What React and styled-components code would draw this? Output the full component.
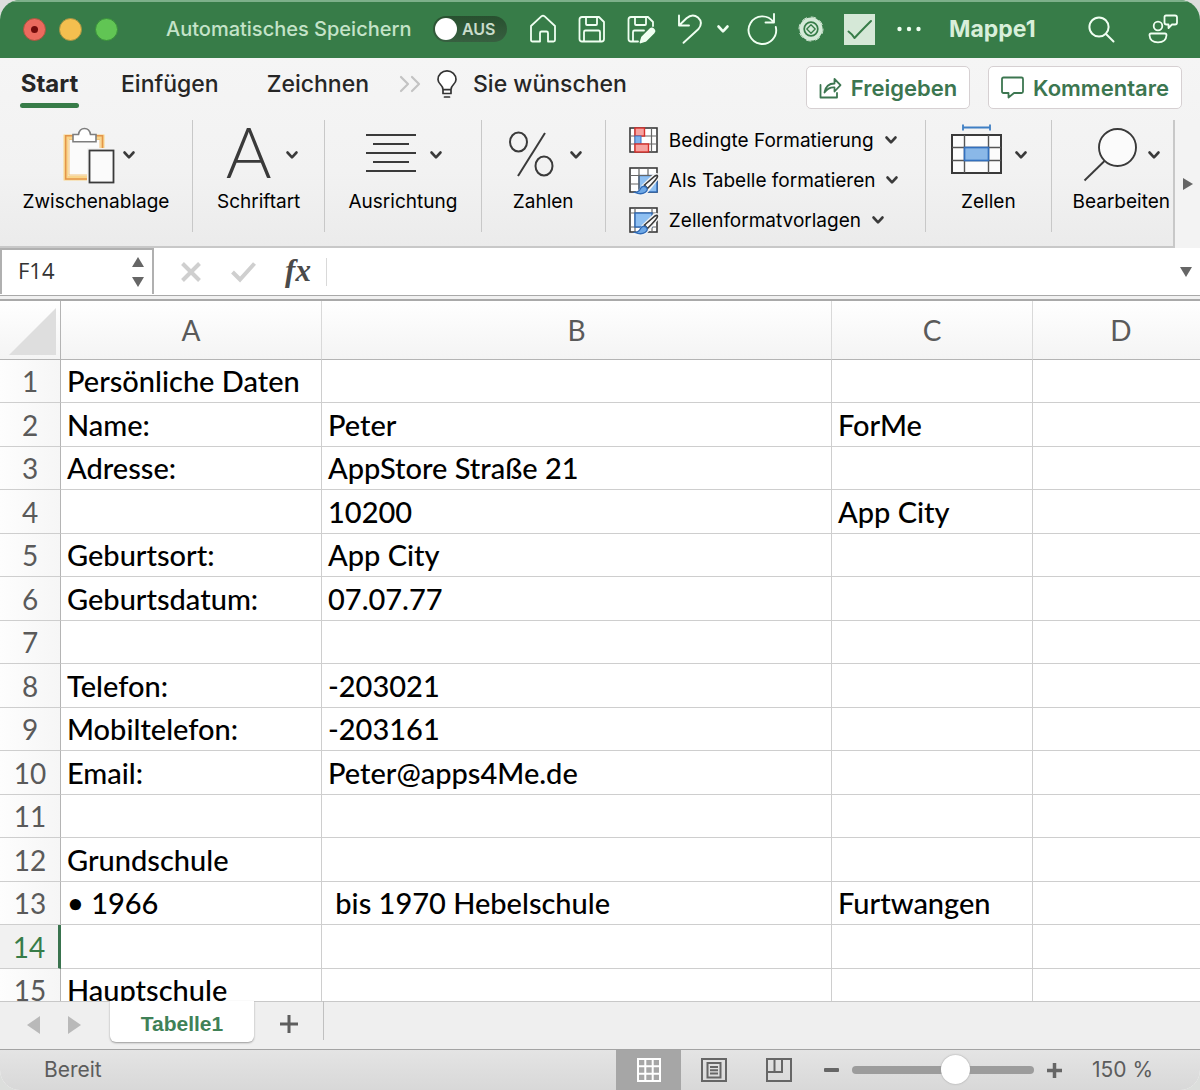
import React, { useState } from "react";
import styled, { createGlobalStyle, css } from "styled-components";

const UI = `Inter, "Liberation Sans", sans-serif`;
const CELL = `Lato, "Liberation Sans", sans-serif`;
const GREEN = "#377c48";

const GlobalStyle = createGlobalStyle`
  *, *::before, *::after { box-sizing: border-box; }
  body { margin: 0; background: #dcdedc; font-family: ${UI}; }
  button, input { font: inherit; color: inherit; margin: 0; }
  button { border: 0; padding: 0; background: none; }
  svg { display: block; flex: none; overflow: visible; }
`;

const Window = styled.div`
  display: flex;
  flex-direction: column;
  height: 100vh;
  border-radius: 20px;
  overflow: hidden;
  background: #fff;
`;

/* Title bar */

const TitleBar = styled.header`
  display: flex;
  align-items: center;
  height: 58px;
  flex: none;
  padding: 0 13px 0 23px;
  background: ${GREEN};
  box-shadow: inset 0 2px #7db08a;
  color: #f0fff2;
`;

const Lights = styled.div`
  display: flex;
  gap: 13px;
  margin-right: 48px;
`;

const Light = styled.button`
  width: 23px;
  height: 23px;
  border-radius: 50%;
  border: 1px solid ${(p) => p.$edge};
  background: ${(p) => p.$fill};
  display: grid;
  place-items: center;
`;

const LightDot = styled.span`
  width: 7px;
  height: 7px;
  border-radius: 50%;
  background: #730b0b;
`;

const AutoSaveLabel = styled.label`
  font-size: 20px;
  font-weight: 500;
  line-height: 26px;
  color: #c4e3c8;
  white-space: nowrap;
  width: 267px;
`;

const Toggle = styled.div`
  display: grid;
  align-items: center;
  width: 74px;
  margin-right: 11px;
  > * { grid-area: 1 / 1; }
`;

const ToggleInput = styled.input`
  appearance: none;
  width: 74px;
  height: 26px;
  border-radius: 13px;
  background: linear-gradient(#28502f, #375f40);
  &::before {
    content: "";
    display: block;
    width: 22px;
    height: 22px;
    margin: 2px;
    border-radius: 50%;
    background: #fff;
  }
`;

const ToggleText = styled.span`
  padding-left: 29px;
  font-size: 16px;
  font-weight: 600;
  line-height: 26px;
  color: #c9dccb;
  pointer-events: none;
`;

const TitleButton = styled.button`
  display: flex;
  align-items: center;
  justify-content: center;
  width: 49px;
  height: 40px;
  flex: none;
`;

const TitleChevron = styled(TitleButton)`
  width: 23px;
  justify-content: flex-start;
  padding-left: 3px;
`;

const DocumentTitle = styled.h1`
  margin: 0 auto 0 16px;
  font-size: 23px;
  font-weight: 700;
  line-height: 28px;
  color: #d8efda;
`;

const TitleTools = styled.div`
  display: flex;
  gap: 12px;
`;

/* Ribbon */

const Ribbon = styled.section`
  flex: none;
  background: linear-gradient(#f5f5f5, #f2f2f2 60%, #ebebeb);
`;

const TabRow = styled.nav`
  display: flex;
  align-items: flex-start;
  height: 62px;
  padding: 8px 18px 0 20px;
  color: #262626;
`;

const RibbonTab = styled.button`
  height: 42px;
  min-width: 59px;
  margin-right: ${(p) => p.$gap || 0}px;
  padding-top: 4px;
  font-size: ${(p) => (p.$active ? 24 : 23)}px;
  line-height: 28px;
  font-weight: ${(p) => (p.$active ? 700 : 500)};
  display: flex;
  flex-direction: column;
  white-space: nowrap;
  &::after {
    content: "";
    width: 100%;
    height: 5px;
    margin-top: 5px;
    border-radius: 3px;
    background: ${(p) => (p.$active ? GREEN : "transparent")};
  }
`;

const TabIcon = styled.span`
  display: flex;
  align-items: center;
  height: 36px;
  margin-right: ${(p) => p.$gap}px;
`;

const ActionButton = styled.button`
  display: flex;
  align-items: center;
  justify-content: center;
  gap: 9px;
  width: ${(p) => p.$width}px;
  height: 43px;
  margin-left: ${(p) => (p.$push ? "auto" : "18px")};
  border: 1px solid #d6d0d2;
  border-radius: 5px;
  background: #fff;
  color: #3c7650;
  font-size: 22px;
  font-weight: 600;
  white-space: nowrap;
`;

const RibbonBody = styled.div`
  display: flex;
`;

const Groups = styled.div`
  display: flex;
  flex: 1;
  min-width: 0;
  height: 128px;
  border-right: 2px solid #c8c8c8;
  border-bottom: 2px solid #c8c8c8;
`;

const Group = styled.div`
  flex: ${(p) => p.$share} 1 0;
  min-width: 0;
  height: 112px;
  border-right: ${(p) => (p.$last ? "0" : "1px solid #c8c8c8")};
  padding-left: ${(p) => (p.$last ? 18 : 0)}px;
  display: flex;
  justify-content: center;
`;

const GroupButton = styled.button`
  display: flex;
  flex-direction: column;
  align-items: center;
  padding-top: 4px;
  font-size: 19px;
  line-height: 24px;
  font-weight: 400;
  color: #000;
  white-space: nowrap;
`;

const IconRow = styled.span`
  display: flex;
  align-items: center;
  gap: 8px;
  height: 62px;
  margin-bottom: 4px;
`;

const LetterIcon = styled.span`
  align-self: flex-start;
  width: 58px;
  padding-left: 6px;
  text-align: left;
  font-family: Lato, "Liberation Sans", sans-serif;
  font-weight: 300;
  font-size: 70px;
  line-height: 54px;
  color: #3a3a3a;
`;

const FormatList = styled.div`
  display: flex;
  flex-direction: column;
  width: 100%;
  padding-left: 23px;
`;

const FormatButton = styled.button`
  display: flex;
  flex: none;
  align-items: center;
  gap: 11px;
  height: 40px;
  font-size: 19px;
  color: #000;
  white-space: nowrap;
`;

const ScrollRibbon = styled.button`
  width: 25px;
  height: 128px;
  display: grid;
  place-items: center;
  background: #f3f3f3;
`;

/* Formula bar */

const FormulaBar = styled.section`
  display: flex;
  flex: none;
  align-items: flex-start;
  height: 53px;
  border-bottom: 2px solid #a9a9a9;
  background: linear-gradient(#fff 47px, #a9a9a9 47px, #a9a9a9 48px, #f1f1f1 48px);
`;

const NameBox = styled.div`
  display: flex;
  align-items: center;
  width: 154px;
  height: 46px;
  padding: 0 8px 0 16px;
  border: 2px solid #b0b0b0;
  border-bottom: 0;
`;

const NameInput = styled.input`
  flex: 1;
  min-width: 0;
  height: 28px;
  border: 0;
  padding: 0 0 4px;
  background: none;
  font-family: "Open Sans", sans-serif;
  font-size: 22px;
  line-height: 24px;
  color: #333;
`;

const Stepper = styled.div`
  display: flex;
  flex-direction: column;
  gap: 10px;
`;

const FormulaTools = styled.div`
  display: flex;
  align-items: center;
  height: 48px;
  padding-left: 10px;
  > button {
    display: grid;
    place-items: center;
    width: 53px;
    height: 30px;
  }
`;

const FxLabel = styled.label`
  width: 57px;
  height: 28px;
  text-align: center;
  border-right: 1px solid #d9d9d9;
  font-family: "Liberation Serif", serif;
  font-style: italic;
  font-weight: 700;
  font-size: 31px;
  line-height: 26px;
  color: #4a4a4a;
`;

const FormulaInput = styled.input`
  flex: 1;
  min-width: 0;
  height: 44px;
  border: 0;
  background: none;
  font-size: 22px;
`;

const FormulaExpand = styled.button`
  width: 28px;
  height: 48px;
  display: grid;
  place-items: center;
`;

/* Sheet */

const SheetArea = styled.main`
  flex: 1;
  min-height: 0;
  overflow: hidden;
`;

const Sheet = styled.table`
  width: calc(100% + 10px);
  table-layout: fixed;
  border-collapse: separate;
  border-spacing: 0;
  font-family: ${CELL};
  font-size: 29px;
  font-weight: 500;
  line-height: 42px;
  color: #000;
`;

const Col = styled.col`
  width: ${(p) => (p.$width ? `${p.$width}px` : "auto")};
`;

const headCell = css`
  padding: 0;
  font-size: 28px;
  font-weight: 400;
  color: #5a5a5a;
  text-align: center;
`;

const ColumnHead = styled.th`
  ${headCell}
  height: 59px;
  border-right: 1px solid #d9d9d9;
  border-bottom: 1px solid #b4b4b4;
  background: linear-gradient(#fff, #f4f4f4);
`;

const CornerHead = styled(ColumnHead)`
  border-right-color: #b4b4b4;
  vertical-align: bottom;
  svg { margin: 0 0 4px 9px; }
`;

const RowHead = styled.th`
  ${headCell}
  border-right: 1px solid #b4b4b4;
  border-bottom: 1px solid #cecece;
  background: linear-gradient(90deg, #fdfdfd, #f6f6f6);
  ${(p) =>
    p.$active &&
    css`
      border-right: 3px solid #39734e;
      background: #f1f1f1;
      color: ${GREEN};
    `}
`;

const Cell = styled.td`
  padding: 0 0 0 6px;
  border-right: 1px solid #cecece;
  border-bottom: 1px solid #cecece;
  white-space: pre;
`;

const Row = styled.tr`
  height: 43px;
  &:nth-child(even) { height: 44px; }
`;

/* Sheet tabs */

const SheetTabs = styled.nav`
  display: flex;
  flex: none;
  height: 48px;
  background: #efefef;
  box-shadow: inset 0 1px #c8c8c8;
`;

const TabArrows = styled.div`
  display: flex;
  align-items: center;
  gap: 28px;
  width: 110px;
  padding-left: 27px;
`;

const SheetTab = styled.button`
  width: 144px;
  height: 41px;
  padding-top: 4px;
  border-radius: 0 0 6px 6px;
  background: #fff;
  box-shadow: 0 1px 2px #999;
  color: #3f8157;
  font-family: "Liberation Sans", sans-serif;
  font-size: 21px;
  font-weight: 700;
  line-height: 26px;
`;

const AddSheet = styled.button`
  width: 70px;
  height: 39px;
  padding-top: 6px;
  display: grid;
  place-items: center;
  border-right: 1px solid #c0c0c0;
`;

/* Status bar */

const StatusBar = styled.footer`
  display: flex;
  flex: none;
  align-items: center;
  height: 41px;
  padding-right: 45px;
  border-top: 1px solid #a3a3a3;
  background: linear-gradient(#e4e4e4, #d8d8d8);
  color: #5c5c5c;
  font-size: 21px;
  line-height: 26px;
`;

const StatusText = styled.span`
  flex: 1;
  padding-left: 44px;
`;

const ViewButton = styled.button`
  display: grid;
  place-items: center;
  width: 65px;
  height: 40px;
  background: ${(p) => (p.$active ? "#a6a6a6" : "none")};
`;

const ZoomStep = styled.button`
  display: grid;
  place-items: center;
  width: 41px;
  height: 30px;
`;

const ZoomSlider = styled.input`
  appearance: none;
  width: 182px;
  height: 30px;
  background: none;
  &::-webkit-slider-runnable-track {
    height: 8px;
    border-radius: 4px;
    background: #9c9c9c;
  }
  &::-webkit-slider-thumb {
    appearance: none;
    width: 29px;
    height: 29px;
    margin-top: -11px;
    border-radius: 50%;
    background: #fff;
    box-shadow: 0 0 2px #999;
  }
`;

const ZoomValue = styled.output`
  width: 63px;
  margin-left: 17px;
  white-space: nowrap;
`;

/* Icons */

const Svg = ({ w, h, sw = 2, color = "currentColor", children }) => (
  <svg width={w} height={h} viewBox={`0 0 ${w} ${h}`} fill="none" stroke={color} strokeWidth={sw}
    strokeLinecap="round" strokeLinejoin="round" aria-hidden="true">
    {children}
  </svg>
);

const Chevron = ({ color = "#3a3a3a" }) => (
  <Svg w={12} h={8} sw={2.6} color={color}><path d="M1.5 1.5 6 6.3 10.5 1.5" /></Svg>
);

const Triangle = ({ dir, color = "#666" }) => {
  const shapes = {
    up: "M0 10 6 0 12 10Z",
    down: "M0 0H12L6 10Z",
    left: "M13 0V18L0 9Z",
    right: "M0 0V18L13 9Z",
    small: "M0 0V12L10 6Z",
  };
  const box = { up: [12, 10], down: [12, 10], left: [13, 18], right: [13, 18], small: [10, 12] }[dir];
  return (
    <svg width={box[0]} height={box[1]} viewBox={`0 0 ${box[0]} ${box[1]}`} fill={color} aria-hidden="true">
      <path d={shapes[dir]} />
    </svg>
  );
};

const HomeIcon = () => (
  <Svg w={28} h={30} sw={1.8}>
    <path d="M2 12 12.6 2.2Q14 1 15.4 2.2L26 12V26Q26 27.500 24.500 27.500H19V19Q19 17.500 17.500 17.500H12.500Q11 17.500 11 19V27.500H3.500Q2 27.500 2 26Z" />
  </Svg>
);

const SaveIcon = () => (
  <Svg w={28} h={28} sw={1.8}>
    <path d="M4 2H21L26 7V24Q26 26.500 23.500 26.500H4Q1.500 26.500 1.500 24V4.500Q1.500 2 4 2Z" />
    <path d="M8 2V9Q8 10 9 10H18Q19 10 19 9V2M6 26V17Q6 15.500 7.500 15.500H20.500Q22 15.500 22 17V26" />
  </Svg>
);

const SaveEditIcon = () => (
  <Svg w={28} h={28} sw={1.8}>
    <path d="M11 26.500H4Q1.500 26.500 1.500 24V4.500Q1.500 2 4 2H21L26 7V11" />
    <path d="M8 2V9Q8 10 9 10H18Q19 10 19 9V2M6 26V17Q6 15.500 7.500 15.500H17" />
    <path d="M13.500 27.500 15 22.500 23.500 14Q25 12.800 26.600 14.300 28.200 16 26.800 17.500L18.300 26Z" fill="currentColor" />
  </Svg>
);

const UndoIcon = () => (
  <Svg w={26} h={30} sw={1.9}>
    <path d="M2 1.500V11.500H12M2.500 11 9.500 4.200Q15.500-1 21 3.500 26.500 8.500 21.500 15L6.500 28.800" />
  </Svg>
);

const RedoIcon = () => (
  <Svg w={30} h={30} sw={1.9}>
    <path d="M27 0V8.500H18.500M26.500 8A13.800 13.800 0 1 0 28.800 13" />
  </Svg>
);

const TargetIcon = () => (
  <Svg w={26} h={26} color={GREEN}>
    <circle cx="13" cy="13" r="10.500" fill="#d5ead8" stroke="#d5ead8" />
    <circle cx="13" cy="13" r="12" stroke="#d5ead8" strokeWidth="1" strokeDasharray="4.700 4.700" />
    <circle cx="13" cy="13" r="6.800" strokeWidth="1.700" />
    <path d="M13 8.800 17.200 13 13 17.200 8.800 13Z" strokeWidth="1.300" />
  </Svg>
);

const CheckIcon = () => (
  <Svg w={31} h={31}>
    <rect width="31" height="31" fill="#d5e8d7" stroke="none" />
    <path d="M4.500 17.500Q8 20 10.500 24 17 17 27 7" stroke={GREEN} strokeWidth="2" />
  </Svg>
);

const DotsIcon = () => (
  <svg width="24" height="6" viewBox="0 0 24 6" fill="currentColor" aria-hidden="true">
    <circle cx="2.500" cy="3" r="2.200" /><circle cx="12" cy="3" r="2.200" /><circle cx="21.500" cy="3" r="2.200" />
  </svg>
);

const SearchIcon = () => (
  <Svg w={27} h={27} sw={2}>
    <circle cx="11" cy="11" r="9.600" /><path d="M18 18 25.500 25.500" />
  </Svg>
);

const PeopleIcon = () => (
  <Svg w={30} h={30} sw={1.8}>
    <circle cx="10" cy="12" r="4.300" />
    <path d="M3 19.500H17Q18.500 19.500 18.500 21.200 18 28.300 10 28.300 2 28.300 1.500 21.200 1.500 19.500 3 19.500Z" />
    <path d="M18 1.500H27Q29 1.500 29 3.500V8.500Q29 10.500 27 10.500H24L20.500 14V10.500H18.500Q16.500 10.500 16.500 8.500V3Q16.500 1.500 18 1.500Z" />
  </Svg>
);

const BulbIcon = () => (
  <Svg w={20} h={28} sw={1.7} color="#333">
    <path d="M6 19.500Q6 17 3.500 14.500 1 12 1 9.500A9 8.700 0 0 1 19 9.500Q19 12 16.500 14.500 14 17 14 19.500V23.500H6ZM6 19.700H14" fill="#fff" />
    <path d="M7.500 27H12.500" />
  </Svg>
);

const MoreTabsIcon = () => (
  <Svg w={22} h={18} sw={2.200} color="#c3c3c3">
    <path d="M2 2 9 9 2 16M13 2 20 9 13 16" />
  </Svg>
);

const ShareIcon = () => (
  <Svg w={23} h={22} sw={1.800}>
    <path d="M1.500 8V20.500H18V16M5.500 15.500Q7 6.500 15.500 6.500V2L21.500 8.200 15.500 14.500V10.500Q9.500 10 5.500 15.500Z" />
  </Svg>
);

const CommentIcon = () => (
  <Svg w={23} h={23} sw={1.800}>
    <path d="M2.500 1.500H20.500Q22 1.500 22 3V15.500Q22 17 20.500 17H13L7.500 21.500V17H2.500Q1 17 1 15.500V3Q1 1.500 2.500 1.500Z" />
  </Svg>
);

const ClipboardIcon = () => (
  <svg width="58" height="62" viewBox="0 0 58 62" fill="none" aria-hidden="true">
    <path d="M45 26V13H9V54H30" stroke="#f9d58b" strokeWidth="5" />
    <rect x="11.500" y="15.500" width="32" height="36" fill="#fbfbfb" />
    <path d="M45.500 26V11.800H8.700V55H31" stroke="#e3954b" strokeWidth="1.500" />
    <path d="M43 26V15.500H12V51H31" stroke="#f3c47c" strokeWidth="1" />
    <path d="M16 10.500H21.500Q22.500 4.500 27.500 4.500T33.500 10.500H39V17.800H16Z" fill="#fff" stroke="#7e7e7e" strokeWidth="1.600" />
    <rect x="30" y="24" width="29" height="36" fill="#f3f3f3" />
    <rect x="32.500" y="26.500" width="24" height="32" fill="#fbfbfb" stroke="#3a3a3a" strokeWidth="1.800" />
  </svg>
);

const AlignIcon = () => (
  <svg width="58" height="62" viewBox="0 0 58 62" stroke="#3a3a3a" strokeWidth="2" aria-hidden="true">
    <path d="M2 11H52M9 20H45M2 29H52M9 38H45M2 47H52" />
  </svg>
);

const PercentIcon = () => (
  <svg width="58" height="62" viewBox="0 0 58 62" fill="none" stroke="#3a3a3a" strokeWidth="2" aria-hidden="true">
    <ellipse cx="14.500" cy="18" rx="8.500" ry="9.500" />
    <ellipse cx="40" cy="42" rx="8.500" ry="9.500" />
    <path d="M41 9 14 52" />
  </svg>
);

const CellsIcon = () => (
  <svg width="58" height="62" viewBox="0 0 58 62" fill="none" aria-hidden="true">
    <path d="M14 3.500H41M14 0.500V6.500M41 0.500V6.500" stroke="#3f7fc4" strokeWidth="1.800" />
    <rect x="3" y="11" width="49" height="38" fill="#fcfcfc" stroke="#3a3a3a" strokeWidth="2" />
    <path d="M15.500 11V49M39.500 11V49M3 23.500H52M3 36.500H52" stroke="#555" strokeWidth="1.400" />
    <rect x="15.500" y="23.500" width="24" height="13" fill="#8ab8e8" stroke="#3370bd" strokeWidth="1.700" />
  </svg>
);

const MagnifierIcon = () => (
  <svg width="58" height="62" viewBox="0 0 58 62" fill="none" stroke="#3a3a3a" strokeWidth="1.900" aria-hidden="true">
    <circle cx="35.500" cy="23.500" r="18.500" fill="#fbfbfb" />
    <path d="M22.500 37 2.500 56.500" />
  </svg>
);

const ConditionalIcon = () => (
  <svg width="29" height="26" viewBox="0 0 29 26" fill="none" aria-hidden="true">
    <rect x="1" y="1" width="27" height="24" fill="#fff" stroke="#3a3a3a" strokeWidth="1.600" />
    <path d="M6 1V25M22.500 1V25M1 9H28M1 17H28" stroke="#666" strokeWidth="1.200" />
    <rect x="6" y="1" width="9.500" height="8" fill="#f6a3a0" stroke="#d8302b" strokeWidth="1.400" />
    <rect x="6" y="9" width="6" height="8" fill="#7fb2ec" stroke="#3b78c9" strokeWidth="1" />
    <rect x="6" y="17" width="13.500" height="8" fill="#f6a3a0" stroke="#d8302b" strokeWidth="1.400" />
  </svg>
);

const Brush = () => (
  <>
    <path d="M14 19 25 8.500Q28 6.500 29 8.500T27 13L19 23Q16 28 6 27 12 24 14 19Z" fill="#fff" stroke="#f4f4f4" strokeWidth="3" />
    <path d="M15.500 18 26 9Q28.500 7.500 28.500 9.500T18.500 21.500Z" fill="#fafafa" stroke="#3a3a3a" strokeWidth="1.600" />
    <path d="M6 25.500Q10 25 11.500 21.500 13.500 18 17 20 20 23 16 25.500 12 28 6 25.500Z" fill="#6ea8e6" stroke="#2e69b5" strokeWidth="1.300" />
  </>
);

const TableFormatIcon = () => (
  <svg width="29" height="26" viewBox="0 0 29 26" fill="none" aria-hidden="true">
    <rect x="1" y="1" width="27" height="24" fill="#fff" stroke="#3a3a3a" strokeWidth="1.600" />
    <rect x="10" y="8.500" width="18" height="16.500" fill="#8fc0f2" stroke="#2e69b5" strokeWidth="1.400" />
    <path d="M10 1V25M19 1V8M1 8.500H28M1 17H10" stroke="#666" strokeWidth="1.200" />
    <Brush />
  </svg>
);

const CellStyleIcon = () => (
  <svg width="29" height="26" viewBox="0 0 29 26" fill="none" aria-hidden="true">
    <rect x="1" y="1" width="27" height="24" fill="#fff" stroke="#3a3a3a" strokeWidth="1.600" />
    <path d="M6 1V25M23 1V25M1 6H28M1 20H28" stroke="#666" strokeWidth="1.200" />
    <rect x="6" y="6" width="17" height="14" fill="#8fc0f2" stroke="#2e69b5" strokeWidth="1.400" />
    <Brush />
  </svg>
);

const NormalViewIcon = () => (
  <svg width="24" height="24" viewBox="0 0 24 24" fill="none" stroke="#fff" strokeWidth="2" aria-hidden="true">
    <path d="M1 1H23V23H1ZM8.300 1V23M15.700 1V23M1 8.300H23M1 15.700H23" />
  </svg>
);

const PageViewIcon = () => (
  <svg width="26" height="24" viewBox="0 0 26 24" fill="none" stroke="#666" strokeWidth="2" aria-hidden="true">
    <path d="M1 1H25V23H1ZM6.500 5H19.500V19.500H6.500ZM9 9H17M9 12.300H17M9 15.600H17" />
  </svg>
);

const BreakViewIcon = () => (
  <svg width="26" height="24" viewBox="0 0 26 24" fill="none" stroke="#666" strokeWidth="2" aria-hidden="true">
    <path d="M1 1H25V23H1ZM1 14H16V1M8.500 1V14" />
  </svg>
);

/* Data */

const COLUMNS = ["A", "B", "C", "D"];
const ROWS = [
  ["Persönliche Daten", "", ""],
  ["Name:", "Peter", "ForMe"],
  ["Adresse:", "AppStore Straße 21", ""],
  ["", "10200", "App City"],
  ["Geburtsort:", "App City", ""],
  ["Geburtsdatum:", "07.07.77", ""],
  ["", "", ""],
  ["Telefon:", "-203021", ""],
  ["Mobiltelefon:", "-203161", ""],
  ["Email:", "Peter@apps4Me.de", ""],
  ["", "", ""],
  ["Grundschule", "", ""],
  ["• 1966", " bis 1970 Hebelschule", "Furtwangen"],
  ["", "", ""],
  ["Hauptschule", "", ""],
];
const ACTIVE_ROW = 14;

const RibbonGroup = ({ share, label, last, children }) => (
  <Group $share={share} $last={last}>
    <GroupButton type="button">
      <IconRow>{children}<Chevron /></IconRow>
      {label}
    </GroupButton>
  </Group>
);

const FormatItem = ({ icon, label }) => (
  <FormatButton type="button">{icon}{label}<Chevron /></FormatButton>
);

export default function App() {
  const [autoSave, setAutoSave] = useState(false);
  const [zoom, setZoom] = useState(58);
  const [cellRef, setCellRef] = useState("F14");
  const [formula, setFormula] = useState("");

  return (
    <Window>
      <GlobalStyle />
      <TitleBar>
        <Lights>
          <Light type="button" aria-label="Schließen" $fill="#ec6a5e" $edge="#a8553f"><LightDot /></Light>
          <Light type="button" aria-label="Minimieren" $fill="#f4bf4f" $edge="#a39142" />
          <Light type="button" aria-label="Vollbild" $fill="#61c554" $edge="#3a8f3c" />
        </Lights>
        <AutoSaveLabel htmlFor="autosave">Automatisches Speichern</AutoSaveLabel>
        <Toggle>
          <ToggleInput id="autosave" type="checkbox" checked={autoSave} onChange={(e) => setAutoSave(e.target.checked)} />
          <ToggleText>AUS</ToggleText>
        </Toggle>
        <TitleButton type="button" aria-label="Startseite"><HomeIcon /></TitleButton>
        <TitleButton type="button" aria-label="Speichern"><SaveIcon /></TitleButton>
        <TitleButton type="button" aria-label="Speichern unter"><SaveEditIcon /></TitleButton>
        <TitleButton type="button" aria-label="Rückgängig"><UndoIcon /></TitleButton>
        <TitleChevron type="button" aria-label="Verlauf"><Chevron color="#f0fff2" /></TitleChevron>
        <TitleButton type="button" aria-label="Wiederholen"><RedoIcon /></TitleButton>
        <TitleButton type="button" aria-label="Aufzeichnen"><TargetIcon /></TitleButton>
        <TitleButton type="button" aria-label="Prüfen"><CheckIcon /></TitleButton>
        <TitleButton type="button" aria-label="Mehr"><DotsIcon /></TitleButton>
        <DocumentTitle>Mappe1</DocumentTitle>
        <TitleTools>
          <TitleButton type="button" aria-label="Suchen"><SearchIcon /></TitleButton>
          <TitleButton type="button" aria-label="Anwesende"><PeopleIcon /></TitleButton>
        </TitleTools>
      </TitleBar>

      <Ribbon>
        <TabRow>
          <RibbonTab type="button" $active $gap={42}>Start</RibbonTab>
          <RibbonTab type="button" $gap={48}>Einfügen</RibbonTab>
          <RibbonTab type="button" $gap={30}>Zeichnen</RibbonTab>
          <TabIcon $gap={16}><MoreTabsIcon /></TabIcon>
          <TabIcon $gap={16}><BulbIcon /></TabIcon>
          <RibbonTab type="button">Sie wünschen</RibbonTab>
          <ActionButton type="button" $push $width={164}><ShareIcon />Freigeben</ActionButton>
          <ActionButton type="button" $width={194}><CommentIcon />Kommentare</ActionButton>
        </TabRow>
        <RibbonBody>
          <Groups>
            <RibbonGroup share={193} label="Zwischenablage"><ClipboardIcon /></RibbonGroup>
            <RibbonGroup share={132} label="Schriftart"><LetterIcon aria-hidden="true">A</LetterIcon></RibbonGroup>
            <RibbonGroup share={156} label="Ausrichtung"><AlignIcon /></RibbonGroup>
            <RibbonGroup share={124} label="Zahlen"><PercentIcon /></RibbonGroup>
            <Group $share={321}>
              <FormatList>
                <FormatItem icon={<ConditionalIcon />} label="Bedingte Formatierung" />
                <FormatItem icon={<TableFormatIcon />} label="Als Tabelle formatieren" />
                <FormatItem icon={<CellStyleIcon />} label="Zellenformatvorlagen" />
              </FormatList>
            </Group>
            <RibbonGroup share={125} label="Zellen"><CellsIcon /></RibbonGroup>
            <RibbonGroup share={104} last label="Bearbeiten"><MagnifierIcon /></RibbonGroup>
          </Groups>
          <ScrollRibbon type="button" aria-label="Weitere Gruppen"><Triangle dir="small" /></ScrollRibbon>
        </RibbonBody>
      </Ribbon>

      <FormulaBar>
        <NameBox>
          <NameInput aria-label="Namenfeld" value={cellRef} onChange={(e) => setCellRef(e.target.value)} />
          <Stepper>
            <button type="button" aria-label="Nach oben"><Triangle dir="up" /></button>
            <button type="button" aria-label="Nach unten"><Triangle dir="down" /></button>
          </Stepper>
        </NameBox>
        <FormulaTools>
          <button type="button" aria-label="Abbrechen">
            <svg width="20" height="20" viewBox="0 0 20 20" stroke="#cfcfcf" strokeWidth="4" aria-hidden="true"><path d="M1.500 1.500 18.500 18.500M18.500 1.500 1.500 18.500" /></svg>
          </button>
          <button type="button" aria-label="Eingeben">
            <svg width="25" height="20" viewBox="0 0 25 20" fill="none" stroke="#cfcfcf" strokeWidth="4" aria-hidden="true"><path d="M1.500 10 9 17.500 23.500 1.500" /></svg>
          </button>
          <FxLabel htmlFor="formula">fx</FxLabel>
        </FormulaTools>
        <FormulaInput id="formula" value={formula} onChange={(e) => setFormula(e.target.value)} />
        <FormulaExpand type="button" aria-label="Bearbeitungsleiste erweitern"><Triangle dir="down" /></FormulaExpand>
      </FormulaBar>

      <SheetArea>
        <Sheet>
          <colgroup>
            <Col $width={61} /><Col $width={261} /><Col $width={510} /><Col $width={201} /><Col />
          </colgroup>
          <thead>
            <tr>
              <CornerHead aria-label="Alles markieren">
                <svg width="47" height="47" viewBox="0 0 47 47" fill="#dedede" aria-hidden="true"><path d="M47 0V47H0Z" /></svg>
              </CornerHead>
              {COLUMNS.map((c) => <ColumnHead key={c} scope="col">{c}</ColumnHead>)}
            </tr>
          </thead>
          <tbody>
            {ROWS.map((cells, i) => (
              <Row key={i}>
                <RowHead scope="row" $active={i + 1 === ACTIVE_ROW}>{i + 1}</RowHead>
                {cells.map((text, j) => <Cell key={j}>{text}</Cell>)}
                <Cell />
              </Row>
            ))}
          </tbody>
        </Sheet>
      </SheetArea>

      <SheetTabs>
        <TabArrows>
          <button type="button" aria-label="Vorheriges Blatt"><Triangle dir="left" color="#b9b9b9" /></button>
          <button type="button" aria-label="Nächstes Blatt"><Triangle dir="right" color="#b9b9b9" /></button>
        </TabArrows>
        <SheetTab type="button">Tabelle1</SheetTab>
        <AddSheet type="button" aria-label="Blatt hinzufügen">
          <svg width="18" height="18" viewBox="0 0 18 18" stroke="#5e5e5e" strokeWidth="3" aria-hidden="true"><path d="M9 0V18M0 9H18" /></svg>
        </AddSheet>
      </SheetTabs>

      <StatusBar>
        <StatusText>Bereit</StatusText>
        <ViewButton type="button" aria-label="Normal" $active><NormalViewIcon /></ViewButton>
        <ViewButton type="button" aria-label="Seitenlayout"><PageViewIcon /></ViewButton>
        <ViewButton type="button" aria-label="Umbruchvorschau"><BreakViewIcon /></ViewButton>
        <ZoomStep type="button" aria-label="Verkleinern">
          <svg width="15" height="4" viewBox="0 0 15 4" fill="#666" aria-hidden="true"><rect width="15" height="4" rx="1" /></svg>
        </ZoomStep>
        <ZoomSlider type="range" aria-label="Zoom" min="0" max="100" value={zoom} onChange={(e) => setZoom(Number(e.target.value))} />
        <ZoomStep type="button" aria-label="Vergrößern">
          <svg width="15" height="15" viewBox="0 0 15 15" stroke="#666" strokeWidth="3.500" aria-hidden="true"><path d="M7.500 0V15M0 7.500H15" /></svg>
        </ZoomStep>
        <ZoomValue>150 %</ZoomValue>
      </StatusBar>
    </Window>
  );
}
